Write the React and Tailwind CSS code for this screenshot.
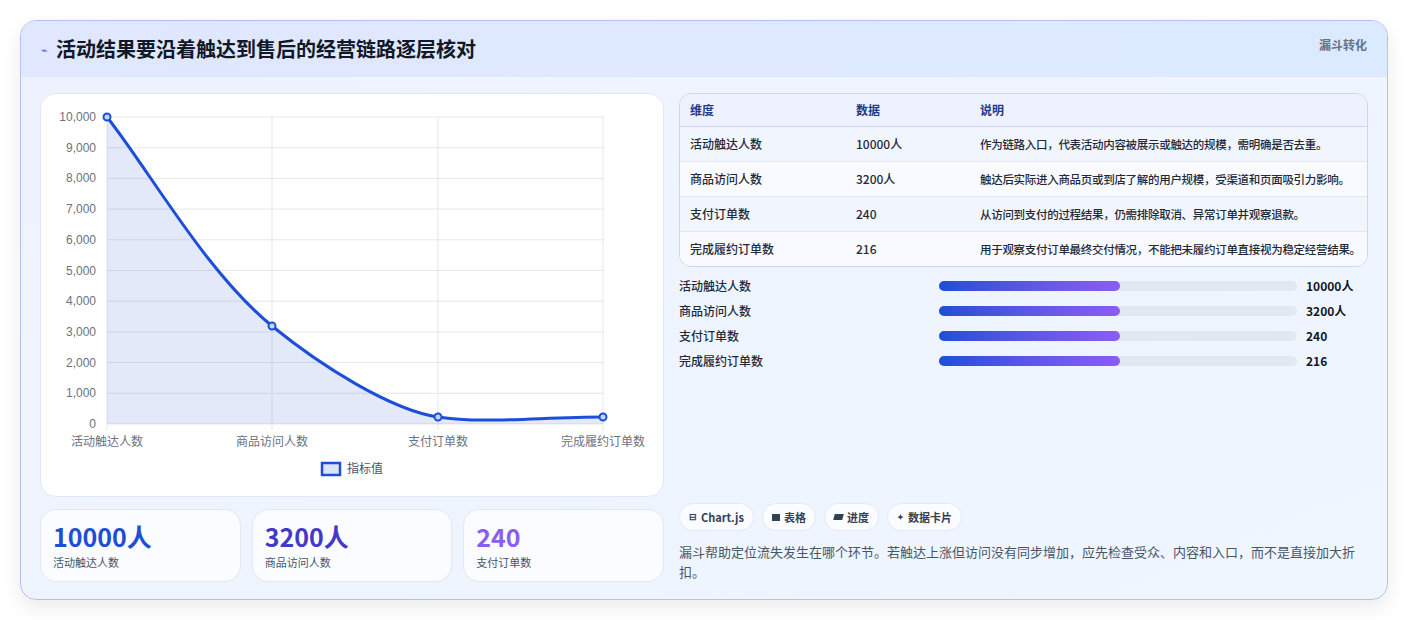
export default function App() {
  const font = { fontFamily: '"Noto Sans CJK SC", "Noto Sans", sans-serif' };
  const rows = [
    ["活动触达人数", "10000人", "作为链路入口，代表活动内容被展示或触达的规模，需明确是否去重。"],
    ["商品访问人数", "3200人", "触达后实际进入商品页或到店了解的用户规模，受渠道和页面吸引力影响。"],
    ["支付订单数", "240", "从访问到支付的过程结果，仍需排除取消、异常订单并观察退款。"],
    ["完成履约订单数", "216", "用于观察支付订单最终交付情况，不能把未履约订单直接视为稳定经营结果。"],
  ];
  const yl = ["10,000","9,000","8,000","7,000","6,000","5,000","4,000","3,000","2,000","1,000","0"];
  const xs = [106, 271, 437, 602];
  const xl = ["活动触达人数","商品访问人数","支付订单数","完成履约订单数"];
  const curve = "M106,115 C150,171 205,270 271,324 C320,364 390,408 437,415 C480,422 540,415 602,415";
  return (
    <div className="w-[1408px] h-[620px] bg-white pt-5 px-5" style={font}>
      <div className="w-[1368px] h-[580px] rounded-2xl border border-[#b4c2ec] overflow-hidden bg-gradient-to-br from-[#eef2fe] to-[#eff6ff] shadow-[0_8px_20px_rgba(0,0,0,0.08)] flex flex-col">
        <div className="h-[56px] shrink-0 bg-gradient-to-r from-[#e0e7ff] to-[#dbeafe] flex items-center justify-between pl-5 pr-5">
          <div className="flex items-center gap-2">
            <span className="text-[#3b5bdb] text-[11px]">⌁</span>
            <span className="text-[20px] font-bold text-[#111827]">活动结果要沿着触达到售后的经营链路逐层核对</span>
          </div>
          <span className="text-[12px] font-bold text-[#64748b] self-start mt-[15px]">漏斗转化</span>
        </div>
        <div className="flex-1 flex gap-[15px] px-[19px] pt-4 pb-5">
          <div className="w-[624px] flex flex-col gap-3">
            <div className="h-[404px] bg-white rounded-2xl border border-[#e1e7f5] relative">
              <svg width="624" height="404" className="absolute left-0 top-0" style={{ fontFamily: '"Liberation Sans", sans-serif' }}>
                {yl.map((l, i) => {
                  const y = 115 - 92 + i * 30.7;
                  return (
                    <g key={l}>
                      <line x1="66" x2="563" y1={y} y2={y} stroke="#e5e7eb" />
                      <text x="55" y={y + 4} textAnchor="end" fontSize="12" fill="#6b7280">{l}</text>
                    </g>
                  );
                })}
                {xs.map((x, i) => (
                  <g key={i}>
                    <line x1={x - 40} x2={x - 40} y1="23" y2="336" stroke="#e5e7eb" />
                    <text x={x - 40} y="352" textAnchor="middle" fontSize="12" fill="#6b7280" style={font}>{xl[i]}</text>
                  </g>
                ))}
                <g transform="translate(-40,-92)">
                  <path d={curve + " L602,422 L106,422 Z"} fill="rgba(29,78,216,0.12)" />
                  <path d={curve} fill="none" stroke="#1d4ed8" strokeWidth="3" />
                  {[[106,115],[271,324],[437,415],[602,415]].map(([x,y],i)=>(
                    <circle key={i} cx={x} cy={y} r="3.5" fill="#c7d2fe" stroke="#1d4ed8" strokeWidth="2" />
                  ))}
                  <rect x="321" y="461" width="18" height="12" fill="#dbe3f8" stroke="#1d4ed8" strokeWidth="2.5" />
                  <text x="346" y="471" fontSize="12" fill="#4b5563" style={font}>指标值</text>
                </g>
              </svg>
            </div>
            <div className="grid grid-cols-3 gap-[11px] h-[73px]">
              {[["10000人","text-[#1d4ed8]","活动触达人数"],["3200人","text-[#4338ca]","商品访问人数"],["240","text-[#8b5cf6]","支付订单数"]].map(([v,c,l])=>(
                <div key={l} className="rounded-2xl bg-white/70 border border-[#e1e7f5] px-3 pt-[10px]">
                  <div className={"text-[25px] font-bold leading-[32px] " + c}>{v}</div>
                  <div className="text-[11px] text-[#475569] mt-[2px]">{l}</div>
                </div>
              ))}
            </div>
          </div>
          <div className="flex-1 flex flex-col">
            <div className="rounded-xl border border-[#cdd6ea] overflow-hidden text-[12px] text-[#1f2937]">
              <div className="grid grid-cols-[166px_124px_1fr] bg-[#eef2ff] h-[33px] items-center px-[10px] font-bold text-[#1e3a8a] border-b border-[#cdd6ea]">
                <div>维度</div><div>数据</div><div>说明</div>
              </div>
              {rows.map((r, i) => (
                <div key={i} className={"grid grid-cols-[166px_124px_1fr] pl-[10px] pr-[4px] py-[8px] leading-[18px] font-medium " + (i % 2 === 0 ? "bg-[#f1f5fe]" : "bg-[#f8faff]") + (i < 3 ? " border-b border-[#e3e8f4]" : "")}>
                  <div>{r[0]}</div><div>{r[1]}</div><div className="text-[11.5px] tracking-[-0.3px]">{r[2]}</div>
                </div>
              ))}
            </div>
            <div className="mt-[10px] flex flex-col gap-[8px] text-[12px] font-medium text-[#1f2937]">
              {rows.map((r) => (
                <div key={r[0]} className="flex items-center h-[17px]">
                  <div className="w-[260px]">{r[0]}</div>
                  <div className="w-[358px] h-[10px] rounded-full bg-[#e2e8f0]">
                    <div className="w-[181px] h-[10px] rounded-full bg-gradient-to-r from-[#1d4ed8] to-[#8b5cf6]" />
                  </div>
                  <div className="ml-[9px] font-bold text-[#111827]">{r[1]}</div>
                </div>
              ))}
            </div>
            <div className="flex-1" />
            <div className="flex gap-[8px] text-[11px] font-bold text-[#334155]">
              <span className="h-[28px] px-[9px] rounded-full bg-white/70 border border-[#e4e9f5] flex items-center gap-1"><span className="text-[9px]">⊟</span>Chart.js</span>
              <span className="h-[28px] px-[9px] rounded-full bg-white/70 border border-[#e4e9f5] flex items-center gap-1"><span className="w-[8px] h-[7px] bg-[#334155] inline-block" />表格</span>
              <span className="h-[28px] px-[9px] rounded-full bg-white/70 border border-[#e4e9f5] flex items-center gap-1"><span className="w-[9px] h-[6px] bg-[#334155] inline-block skew-x-[-15deg]" />进度</span>
              <span className="h-[28px] px-[9px] rounded-full bg-white/70 border border-[#e4e9f5] flex items-center gap-1"><span className="text-[8px]">✦</span>数据卡片</span>
            </div>
            <div className="mt-[11px] text-[13px] leading-[20px] text-[#475569] pr-2">漏斗帮助定位流失发生在哪个环节。若触达上涨但访问没有同步增加，应先检查受众、内容和入口，而不是直接加大折扣。</div>
          </div>
        </div>
      </div>
    </div>
  );
}
